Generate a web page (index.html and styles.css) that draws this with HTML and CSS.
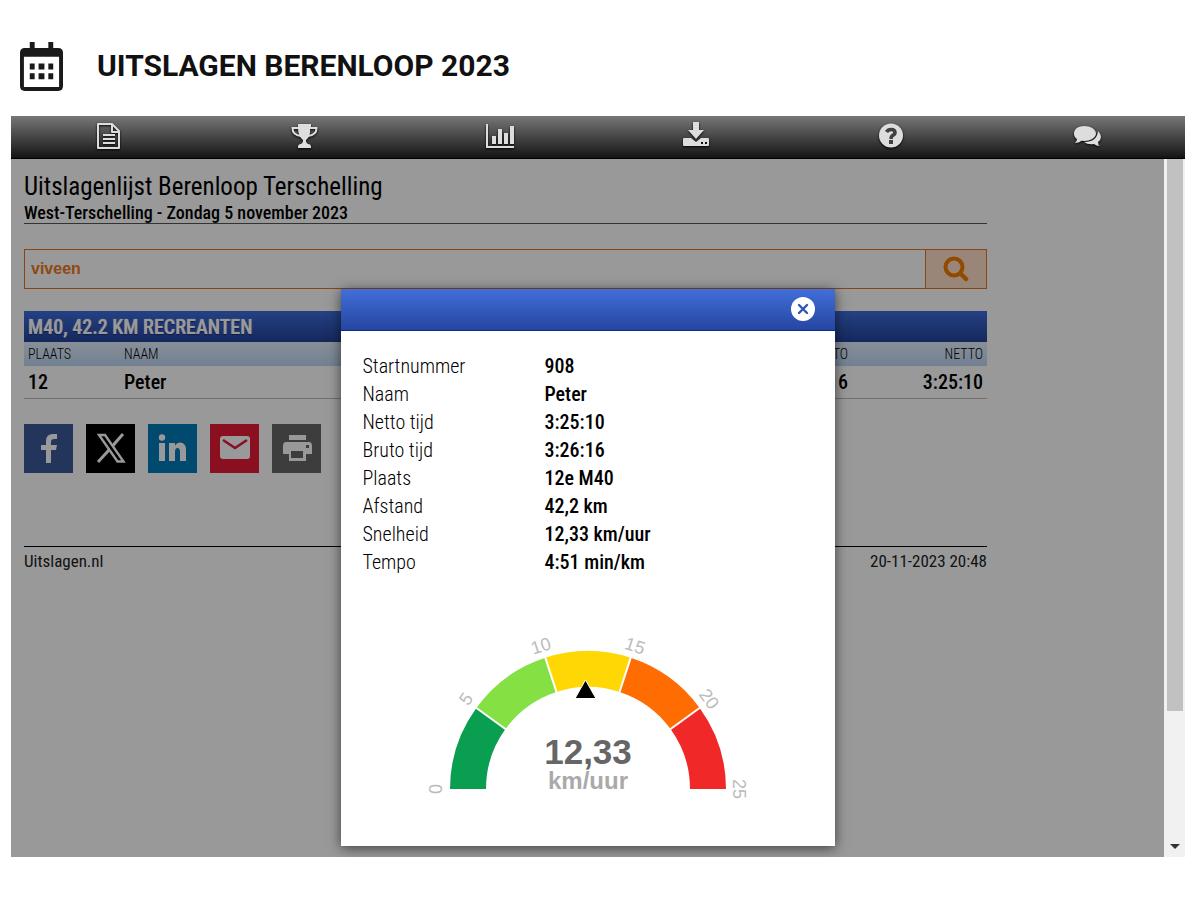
FILE: index.html
```html
<!DOCTYPE html>
<html lang="nl">
<head>
<meta charset="utf-8">
<title>Uitslagen Berenloop 2023</title>
<meta name="viewport" content="width=device-width, initial-scale=1">
<link rel="stylesheet" href="styles.css">
</head>
<body>
<header class="page-header">
  <svg class="calendar" viewBox="0 0 44 50" aria-hidden="true">
    <path fill="#1a1a1a" fill-rule="evenodd" d="M10 0h5v6h14V0h5v6h5q5 0 5 5v34q0 5-5 5H5q-5 0-5-5V11q0-5 5-5h5zM4 15v31h36V15z"/>
    <path fill="#1a1a1a" d="M10 22h5v6h-5zm9 0h6v6h-6zm10 0h5v6h-5zM10 32h5v6h-5zm9 0h6v6h-6zm10 0h5v6h-5z"/>
  </svg>
  <h1 class="page-title">UITSLAGEN BERENLOOP 2023</h1>
</header>

<section class="frame">
  <nav class="toolbar">
    <a class="tool" href="#uitslagen" aria-label="Uitslagen"><svg viewBox="0 0 28 28"><path fill="none" stroke="#ddd" stroke-width="2" stroke-linejoin="round" d="M3 2h14l7 7v17H3zM17 2v8h7"/><path stroke="#ddd" stroke-width="2" d="M8 13h12M8 17h12M8 21h12"/></svg></a>
    <a class="tool" href="#klassement" aria-label="Klassement"><svg viewBox="0 0 28 28"><path fill="#ddd" d="M8 2h13v4h-1q1 8-4 12v1q0 2 2 3 3 0 3 3v1H8v-1q0-3 3-3 2-1 2-3v-1Q8 14 8 6z"/><path fill="none" stroke="#ddd" stroke-width="2" d="M9 6H2.500q0 7 8.500 8M20 6h6.500q0 7-8.500 8"/></svg></a>
    <a class="tool" href="#statistiek" aria-label="Statistiek"><svg viewBox="0 0 28 28"><path fill="none" stroke="#ddd" stroke-width="2" d="M1 2v23h27"/><path fill="#ddd" d="M6 14h4v8H6zm6-7h4v15h-4zm6 4h4v11h-4zm6-7h4v18h-4z"/></svg></a>
    <a class="tool" href="#download" aria-label="Download"><svg viewBox="0 0 28 28"><path fill="#ddd" d="M11 0h6v8h5l-8 9-8-9h5z"/><path fill="#ddd" fill-rule="evenodd" d="M2 16h7l5 4 5-4h7q1 0 1 1v6q0 1-1 1H2q-1 0-1-1v-6q0-1 1-1zm17 4v2h2v-2zm4 0v2h2v-2z"/></svg></a>
    <a class="tool" href="#help" aria-label="Help"><svg viewBox="0 0 28 28"><circle cx="14" cy="13.500" r="12" fill="#ddd"/><path fill="none" stroke="#404040" stroke-width="3.600" d="M9.500 10Q11 7.500 14 7.500q4 0 4 3 0 2-2.500 3Q14 14.500 14 17"/><path fill="#404040" d="M12 18h4v4h-4z"/></svg></a>
    <a class="tool" href="#reacties" aria-label="Reacties"><svg viewBox="0 0 28 28"><path fill="#ddd" d="M25 9q3 3 3 6 0 3-3 5 0 3 2 4-4 0-6-2-6 1-10-2 13 0 14-11z"/><path fill="#ddd" d="M11.500 4C17 4 23 7 23 11.500S17 19 11.500 19l-3-.3Q6 21 2 21q2-2 2-4Q1 15 1 11.500C1 7 5 4 11.500 4z"/></svg></a>
  </nav>

  <div class="viewport">
    <main class="content">
      <div class="results">
        <div class="event">
          <h2 class="event-name">Uitslagenlijst Berenloop Terschelling</h2>
          <p class="event-date">West-Terschelling - Zondag 5 november 2023</p>
        </div>

        <form class="search">
          <input class="search-input" type="text" value="viveen" aria-label="Zoek deelnemer">
          <button class="search-button" type="button" aria-label="Zoeken"><svg viewBox="0 0 26 26"><circle cx="11" cy="11" r="8.500" fill="none" stroke="#f47a00" stroke-width="4"/><path stroke="#f47a00" stroke-width="4.500" stroke-linecap="round" d="M17.500 17.500 23 23"/></svg></button>
        </form>

        <table class="ranking">
          <colgroup><col class="col-place"><col><col class="col-time"><col class="col-time"></colgroup>
          <thead>
            <tr class="category"><th colspan="4">M40, 42.2 KM RECREANTEN</th></tr>
            <tr class="columns"><th>PLAATS</th><th>NAAM</th><th class="num">BRUTO</th><th class="num">NETTO</th></tr>
          </thead>
          <tbody>
            <tr class="runner"><td>12</td><td>Peter</td><td class="num">3:26:16</td><td class="num">3:25:10</td></tr>
          </tbody>
        </table>

        <div class="share">
          <a class="share-link facebook" href="#facebook" aria-label="Facebook"><svg viewBox="0 0 32 32"><path fill="#fff" d="M13 31V18H8v-5h5V9q0-7 7-7h4v5h-3q-3 0-3 3v3h6l-1 5h-5v13z"/></svg></a>
          <a class="share-link x" href="#x" aria-label="X"><svg viewBox="0 0 32 32"><path fill="none" stroke="#fff" stroke-width="2.400" d="M4 3h6l18.500 26.500h-6z"/><path fill="none" stroke="#fff" stroke-width="3" d="M28 2 17.500 14M14 18 3 30"/></svg></a>
          <a class="share-link linkedin" href="#linkedin" aria-label="LinkedIn"><svg viewBox="0 0 32 32"><circle cx="5" cy="5.500" r="3.200" fill="#fff"/><path fill="#fff" d="M2 11h6v18H2zM12 11h6v2.500q2-3 5-3 6 0 6 7.500v11h-6v-9q0-4-2.500-4T18 20v9h-6z"/></svg></a>
          <a class="share-link mail" href="#mail" aria-label="E-mail"><svg viewBox="0 0 32 32"><rect x="1" y="4" width="30" height="23" rx="3" fill="#fff"/><path fill="none" stroke="#e51938" stroke-width="2.600" d="m4 8 12 8 12-8"/></svg></a>
          <a class="share-link print" href="#print" aria-label="Afdrukken"><svg viewBox="0 0 32 32"><path fill="#fff" fill-rule="evenodd" d="M8 3h17v5H8zM5 10h23q3 0 3 4v8h-6v7H8v-7H2v-8q0-4 3-4zm5 9v7h12v-7zm15-6v3h3v-3z"/></svg></a>
        </div>

        <footer class="footer"><a class="site-link" href="#uitslagen">Uitslagen.nl</a><time>20-11-2023 20:48</time></footer>
      </div>
    </main>

    <div class="scrollbar" aria-hidden="true"><div class="scroll-thumb"></div><div class="scroll-arrow"></div></div>

    <div class="overlay">
      <section class="dialog" role="dialog" aria-label="Deelnemer">
        <div class="dialog-bar">
          <button class="close" type="button" aria-label="Sluiten"><svg viewBox="0 0 24 24"><path stroke="#2c55b8" stroke-width="2.400" stroke-linecap="round" d="m8 8 8 8m0-8-8 8"/></svg></button>
        </div>
        <dl class="details">
          <dt>Startnummer</dt><dd>908</dd>
          <dt>Naam</dt><dd>Peter</dd>
          <dt>Netto tijd</dt><dd>3:25:10</dd>
          <dt>Bruto tijd</dt><dd>3:26:16</dd>
          <dt>Plaats</dt><dd>12e M40</dd>
          <dt>Afstand</dt><dd>42,2 km</dd>
          <dt>Snelheid</dt><dd>12,33 km/uur</dd>
          <dt>Tempo</dt><dd>4:51 min/km</dd>
        </dl>
        <svg class="gauge" viewBox="-170 -160 340 180" role="img" aria-label="Snelheid 12,33 km/uur">
          <g fill="none" stroke-width="36">
            <path stroke="#0a9e50" d="M-120 0A120 120 0 0 1-97.080-70.530"/>
            <path stroke="#84e043" d="M-97.080-70.530A120 120 0 0 1-37.080-114.130"/>
            <path stroke="#ffd705" d="M-37.080-114.130A120 120 0 0 1 37.080-114.130"/>
            <path stroke="#ff6c02" d="M37.080-114.130A120 120 0 0 1 97.080-70.530"/>
            <path stroke="#f02828" d="M97.080-70.530A120 120 0 0 1 120 0"/>
          </g>
          <path stroke="#fff" stroke-width="2" d="M-80.900-58.800-113.300-82.300M-30.900-95.100-43.300-133.100M30.900-95.100 43.300-133.100M80.900-58.800 113.300-82.300"/>
          <path stroke="#fff" d="M-2.500-109 8-90.500h-21z"/>
          <g class="gauge-ticks">
            <text transform="translate(-152 0) rotate(-90)" y="6">0</text>
            <text transform="translate(-122 -90) rotate(-54)" y="6">5</text>
            <text transform="translate(-47 -143) rotate(-18)" y="6">10</text>
            <text transform="translate(47 -143) rotate(18)" y="6">15</text>
            <text transform="translate(121 -90) rotate(54)" y="6">20</text>
            <text transform="translate(151 0) rotate(90)" y="6">25</text>
          </g>
          <text class="gauge-value" y="-25">12,33</text>
          <text class="gauge-unit" y="0">km/uur</text>
        </svg>
      </section>
    </div>
  </div>
</section>
</body>
</html>
```
FILE: styles.css
```css
* { box-sizing: border-box; }

body {
  margin: 0;
  padding: 0 15px 0 11px;
  background: #fff;
  color: #000;
  font-family: "Roboto Condensed", "Liberation Sans Narrow", Roboto, sans-serif;
}

h1, h2, p, dl, dd { margin: 0; }
a { color: inherit; text-decoration: none; }
svg { display: block; }

.page-header {
  display: flex;
  align-items: center;
  gap: 34px;
  height: 116px;
  padding: 16px 9px 0;
}
.calendar { width: 43px; height: 49px; }
.page-title {
  color: #111;
  font: bold 30px/36px Roboto, sans-serif;
}

.toolbar {
  display: grid;
  grid-template-columns: repeat(6, 1fr);
  height: 43px;
  border-bottom: 1px solid #000;
  background: linear-gradient(#777, #141414);
}
.tool {
  display: flex;
  align-items: flex-start;
  justify-content: center;
  padding-top: 6px;
}
.tool svg {
  width: 28px;
  height: 28px;
  filter: drop-shadow(0 1px 1px #000);
}

.viewport {
  position: relative;
  display: flex;
  min-height: 698px;
}
.content { flex: 1; padding: 13px; }
.results { max-width: 963px; }

.event { border-bottom: 1px solid #555; }
.event-name { font-size: 25px; font-weight: 400; line-height: 30px; }
.event-date { font-size: 18px; font-weight: 500; line-height: 21px; }

.search {
  display: flex;
  height: 40px;
  margin-top: 25px;
  border: 1px solid #e87424;
}
.search-input {
  flex: 1;
  min-width: 0;
  padding: 0 6px;
  border: 0;
  background: none;
  color: #f07818;
  font: bold 16px "Liberation Sans", Arial, sans-serif;
}
.search-button {
  display: grid;
  place-items: center;
  width: 61px;
  padding: 0;
  border: 0;
  border-left: 1px solid #e87424;
  background: #ffe0c8;
}
.search-button svg { width: 26px; height: 26px; }

.ranking {
  width: 100%;
  margin-top: 22px;
  border-collapse: collapse;
  table-layout: fixed;
}
.ranking th, .ranking td { padding: 0 4px; text-align: left; }
.ranking .num { text-align: right; }
.ranking .col-place { width: 96px; }
.ranking .col-time { width: 135px; }
.category { height: 31px; background: linear-gradient(#3e6edc, #22439a); }
.ranking .category th {
  color: #fff;
  font-size: 20px;
  font-weight: 500;
  text-shadow: 0 0 1px #fff, 0 1px 1px #001a60;
}
.columns { height: 24px; background: linear-gradient(#e4effc, #bdd6f4); }
.columns th { font-size: 14px; font-weight: 300; }
.runner { height: 32px; border-bottom: 1px solid #bbb; }
.runner td { font-size: 20px; font-weight: 500; }

.share { display: flex; gap: 13px; margin-top: 25px; }
.share-link {
  display: grid;
  place-items: center;
  width: 49px;
  height: 49px;
}
.share-link svg { width: 32px; height: 32px; }
.facebook { background: #3b5998; }
.x { background: #000; }
.linkedin { background: #007ab9; }
.mail { background: #e51938; }
.print { background: #666; }

.footer {
  display: flex;
  justify-content: space-between;
  margin-top: 73px;
  padding-top: 3px;
  border-top: 1px solid #000;
  color: #222;
  font-size: 17px;
  line-height: 22px;
}

.scrollbar {
  display: flex;
  flex-direction: column;
  width: 21px;
  padding: 0 2px 8px 3px;
  background: #f1f1f1;
}
.scroll-thumb { height: 80%; background: #c1c1c1; }
.scroll-arrow {
  align-self: center;
  margin-top: auto;
  border: 5px solid transparent;
  border-top-color: #333;
  border-bottom: 0;
}

.overlay {
  position: absolute;
  inset: 0 21px 0 0;
  display: flex;
  align-items: flex-start;
  justify-content: center;
  overflow: hidden;
  padding-top: 130px;
  background: rgba(0, 0, 0, 0.4);
}
.dialog {
  width: 494px;
  padding-bottom: 37px;
  background: #fff;
  box-shadow: 0 2px 12px rgba(0, 0, 0, 0.6);
}
.dialog-bar {
  display: flex;
  justify-content: flex-end;
  height: 42px;
  padding: 8px 20px 0;
  border-bottom: 1px solid #0b2f8c;
  background: linear-gradient(#426fdb, #2545a0);
}
.close {
  width: 24px;
  height: 24px;
  padding: 0;
  border: 0;
  border-radius: 50%;
  background: #fff;
}
.details {
  display: grid;
  grid-template-columns: 182px 1fr;
  padding: 21px 22px 0;
  font-size: 20px;
  line-height: 28px;
}
.details dt { font-weight: 300; }
.details dd { font-weight: 500; }

.gauge {
  width: 340px;
  height: 180px;
  margin: 53px auto 0;
  font-family: "Liberation Sans", Arial, sans-serif;
  text-anchor: middle;
}
.gauge-ticks { fill: #bbb; font-size: 18px; }
.gauge-value { fill: #666; font-size: 35px; font-weight: bold; }
.gauge-unit { fill: #aaa; font-size: 24px; font-weight: bold; }
```
